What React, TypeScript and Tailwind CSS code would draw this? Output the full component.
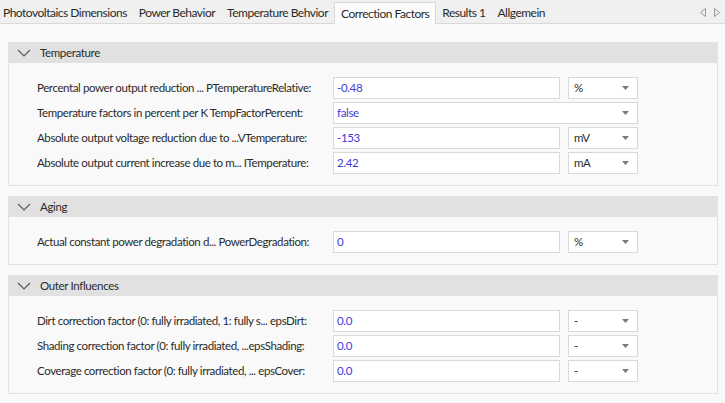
import { ReactNode } from 'react';

type Field = {
    label: string;
    value: string;
    unit?: string;
    wide?: boolean;
};

type Group = {
    title: string;
    fields: Field[];
};

const tabs = [
    'Photovoltaics Dimensions',
    'Power Behavior',
    'Temperature Behvior',
    'Correction Factors',
    'Results 1',
    'Allgemein'
];

const groups: Group[] = [
    {
        title: 'Temperature',
        fields: [
            { label: 'Percental power output reduction ... PTemperatureRelative:', value: '-0.48', unit: '%' },
            { label: 'Temperature factors in percent per K  TempFactorPercent:', value: 'false', wide: true },
            { label: 'Absolute output voltage reduction due to ...VTemperature:', value: '-153', unit: 'mV' },
            { label: 'Absolute output current increase due to m... ITemperature:', value: '2.42', unit: 'mA' }
        ]
    },
    {
        title: 'Aging',
        fields: [
            { label: 'Actual constant power degradation d... PowerDegradation:', value: '0', unit: '%' }
        ]
    },
    {
        title: 'Outer Influences',
        fields: [
            { label: 'Dirt correction factor (0: fully irradiated, 1: fully s... epsDirt:', value: '0.0', unit: '-' },
            { label: 'Shading correction factor (0: fully irradiated, ...epsShading:', value: '0.0', unit: '-' },
            { label: 'Coverage correction factor (0: fully irradiated, ... epsCover:', value: '0.0', unit: '-' }
        ]
    }
];

const DropArrow = () => (
    <svg width="7" height="4" viewBox="0 0 7 4" className="shrink-0">
        <path d="M0 0 L7 0 L3.5 4 Z" fill="#7a7a7a" />
    </svg>
);

const Chevron = () => (
    <svg width="14" height="8" viewBox="0 0 14 8" className="shrink-0">
        <path d="M1 1 L7 7 L13 1" fill="none" stroke="#555" strokeWidth="1.1" />
    </svg>
);

const Box = ({ children, className }: { children: ReactNode; className: string }) => (
    <div className={`h-[22px] bg-white border border-[#d9d9d9] flex items-center ${className}`}>{children}</div>
);

const Row = ({ field }: { field: Field }) => (
    <div className="flex items-center h-[22px]">
        <div className="w-[296px] shrink-0 text-[#2b2b2b] whitespace-nowrap overflow-hidden tracking-[-0.4px]">
            {field.label}
        </div>
        {field.wide ? (
            <Box className="w-[305px] pl-[3px] pr-[8px] justify-between">
                <span className="text-[#3c3cd6]">{field.value}</span>
                <DropArrow />
            </Box>
        ) : (
            <>
                <Box className="w-[227px] pl-[3px]">
                    <span className="text-[#3c3cd6]">{field.value}</span>
                </Box>
                <Box className="w-[70px] ml-[8px] pl-[5px] pr-[8px] justify-between">
                    <span className="text-[#2b2b2b]">{field.unit}</span>
                    <DropArrow />
                </Box>
            </>
        )}
    </div>
);

const Section = ({ group }: { group: Group }) => (
    <div>
        <div className="h-[21px] bg-[#e1e1e1] flex items-center pl-[9px] gap-[9px] text-[#2b2b2b]">
            <Chevron />
            <span>{group.title}</span>
        </div>
        <div className="border-x border-b border-[#e2e2e2] pl-[28px] pt-[14px] pb-[11px] flex flex-col gap-[3px]">
            {group.fields.map((f) => (
                <Row key={f.label} field={f} />
            ))}
        </div>
    </div>
);

export default function App() {
    return (
        <div
            className="w-[725px] h-[403px] overflow-hidden bg-[#f9f9f9] text-[11.5px] tracking-[-0.35px]"
            style={{ fontFamily: 'Lato, "Liberation Sans", sans-serif' }}
        >
            {/* Tab strip */}
            <div className="h-[24px] bg-[#f0f0f0] border-b border-[#d9d9d9] flex items-end text-[12px] tracking-[-0.5px]">
                {tabs.map((t) => {
                    const active = t === 'Correction Factors';
                    return (
                        <div
                            key={t}
                            className={`px-[6px] first:pl-[3px] flex items-center whitespace-nowrap ${
                                active ? 'bg-[#fcfcfc] border border-b-0 border-[#d9d9d9] -mb-px h-[22px]' : 'h-[21px]'
                            }`}
                        >
                            <span className="text-[#2b2b2b]">{t}</span>
                        </div>
                    );
                })}
                <div className="ml-auto flex items-center gap-[8px] h-[21px] pr-[5px]">
                    <svg width="6" height="9" viewBox="0 0 6 9">
                        <path d="M5.5 0.5 L0.5 4.5 L5.5 8.5 Z" fill="none" stroke="#999" />
                    </svg>
                    <svg width="6" height="9" viewBox="0 0 6 9">
                        <path d="M0.5 0.5 L5.5 4.5 L0.5 8.5 Z" fill="none" stroke="#999" />
                    </svg>
                </div>
            </div>

            {/* Property groups */}
            <div className="pl-[8px] pr-[7px] pt-[18px] flex flex-col gap-[10px]">
                {groups.map((g) => (
                    <Section key={g.title} group={g} />
                ))}
            </div>
        </div>
    );
}
